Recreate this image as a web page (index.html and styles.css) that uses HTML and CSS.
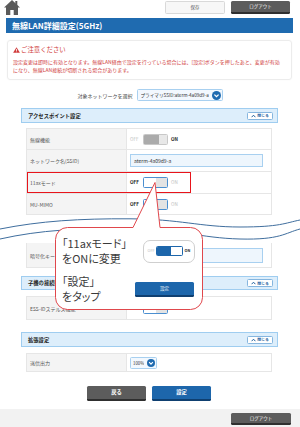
FILE: index.html
```html
<!DOCTYPE html>
<html lang="ja">
<head>
<meta charset="utf-8">
<title>無線LAN詳細設定(5GHz)</title>
<link rel="stylesheet" href="styles.css">
</head>
<body>
<div class="page">
  <header class="topbar">
    <a class="home-link" href="#" aria-label="ホーム">
      <svg class="home" width="16" height="15" viewBox="0 0 16 15">
        <polygon points="8,0 0,7.5 16,7.5" fill="#5a5a5a"/>
        <rect x="11.3" y="1" width="2" height="5" fill="#5a5a5a"/>
        <rect x="2" y="7" width="12" height="8" fill="#5a5a5a"/>
        <rect x="6.3" y="10" width="3.4" height="5" fill="#ffffff"/>
      </svg>
    </a>
    <div class="top-actions">
      <button class="btn btn-light">保存</button>
      <button class="btn btn-dark">ログアウト</button>
    </div>
  </header>

  <h1 class="title">無線LAN詳細設定(5GHz)</h1>

  <div class="notice">
    <p class="notice-head">
      <svg class="warn" width="7" height="6" viewBox="0 0 7 6" aria-hidden="true"><path d="M3.5 0.2 L6.9 5.8 L0.1 5.8 Z" fill="#d03a3a"/><rect x="3.1" y="1.9" width="0.8" height="2.1" fill="#fff"/><rect x="3.1" y="4.5" width="0.8" height="0.7" fill="#fff"/></svg>
      ご注意ください
    </p>
    <p class="notice-body">設定変更は即時に有効となります。無線LAN経由で設定を行っている場合には、[設定]ボタンを押したあと、変更が有効<br>になり、無線LAN接続が切断される場合があります。</p>
  </div>

  <div class="netsel">
    <span class="netsel-label">対象ネットワークを選択</span>
    <div class="select select-wide">
      <span class="select-text">プライマリSSID:aterm-4a09d9-a</span>
      <svg class="chev" width="9" height="9" viewBox="0 0 9 9" aria-hidden="true"><circle cx="4.5" cy="4.5" r="4.5" fill="#1f6bb0"/><path d="M2.4 3.6 L4.5 5.7 L6.6 3.6" stroke="#fff" stroke-width="1.3" fill="none"/></svg>
    </div>
  </div>

  <div class="section-head">
    <span>アクセスポイント設定</span>
    <button class="close-btn"><svg width="5" height="4" viewBox="0 0 5 4" aria-hidden="true"><path d="M0.6 3.2 L2.5 1.2 L4.4 3.2" stroke="#1f5f9e" stroke-width="1" fill="none"/></svg>閉じる</button>
  </div>

  <div class="table">
    <div class="row h21">
      <div class="label">無線機能</div>
      <div class="value">
        <span class="sw-txt dim">OFF</span>
        <span class="toggle t-disabled"><i></i><b></b></span>
        <span class="sw-txt strong">ON</span>
      </div>
    </div>
    <div class="row h22">
      <div class="label">ネットワーク名(SSID)</div>
      <div class="value"><div class="input">aterm-4a09d9-a</div></div>
    </div>
    <div class="row h22 marked">
      <div class="label">11axモード</div>
      <div class="value">
        <span class="sw-txt strong">OFF</span>
        <span class="toggle t-off"><i></i><b></b></span>
        <span class="sw-txt dim">ON</span>
      </div>
      <span class="highlight"></span>
    </div>
    <div class="row h21">
      <div class="label">MU-MIMO</div>
      <div class="value">
        <span class="sw-txt strong">OFF</span>
        <span class="toggle t-off"><i></i><b></b></span>
        <span class="sw-txt dim">ON</span>
      </div>
    </div>
  </div>

  <div class="cut">
    <svg width="300" height="28" viewBox="0 0 300 28" aria-hidden="true">
      <path d="M0 14 C 40 6, 80 3.5, 130 3.8 S 200 12, 240 12 S 285 8, 300 5" stroke="#3f6e9e" stroke-width="1" fill="none"/>
      <path d="M0 24 C 40 15, 80 13, 130 13.5 S 200 23, 240 24 S 285 18, 300 14" stroke="#3f6e9e" stroke-width="1" fill="none"/>
    </svg>
  </div>

  <div class="table table-cont">
    <div class="row h25">
      <div class="label">暗号化キー</div>
      <div class="value"><div class="input"></div></div>
    </div>
  </div>

  <div class="section-head sh2">
    <span>子機の接続制限</span>
    <button class="close-btn"><svg width="5" height="4" viewBox="0 0 5 4" aria-hidden="true"><path d="M0.6 3.2 L2.5 1.2 L4.4 3.2" stroke="#1f5f9e" stroke-width="1" fill="none"/></svg>閉じる</button>
  </div>

  <div class="table table-sub">
    <div class="row h23">
      <div class="label">ESS-IDステルス機能</div>
      <div class="value">
        <span class="sw-txt strong">OFF</span>
        <span class="toggle t-off"><i></i><b></b></span>
        <span class="sw-txt dim">ON</span>
      </div>
    </div>
  </div>

  <div class="section-head sh3">
    <span>拡張設定</span>
    <button class="close-btn"><svg width="5" height="4" viewBox="0 0 5 4" aria-hidden="true"><path d="M0.6 3.2 L2.5 1.2 L4.4 3.2" stroke="#1f5f9e" stroke-width="1" fill="none"/></svg>閉じる</button>
  </div>

  <div class="table table-sub">
    <div class="row h18">
      <div class="label">送信出力</div>
      <div class="value">
        <div class="select select-small">
          <span class="select-text">100%</span>
          <svg class="chev" width="8" height="8" viewBox="0 0 9 9" aria-hidden="true"><circle cx="4.5" cy="4.5" r="4.5" fill="#1f6bb0"/><path d="M2.4 3.6 L4.5 5.7 L6.6 3.6" stroke="#fff" stroke-width="1.3" fill="none"/></svg>
        </div>
      </div>
    </div>
  </div>

  <div class="actions">
    <button class="btn btn-big btn-dark">戻る</button>
    <button class="btn btn-big btn-blue">設定</button>
  </div>

  <footer class="footer">
    <button class="btn btn-dark">ログアウト</button>
  </footer>

  <div class="callout">
    <svg class="callout-shape" width="148" height="128" viewBox="0 0 148 128" aria-hidden="true">
      <path d="M12.5 45.5 H78 L100 0.5 L105 45.5 H135.5 A12 12 0 0 1 147.5 57.5 V115.5 A12 12 0 0 1 135.5 127.5 H12.5 A12 12 0 0 1 0.5 115.5 V57.5 A12 12 0 0 1 12.5 45.5 Z" fill="#fff" stroke="#e0474c" stroke-width="1"/>
    </svg>
    <div class="callout-body">
      <p class="callout-text">「11axモード」<br>をONに変更</p>
      <div class="demo-switch">
        <span class="sw-txt dim">OFF</span>
        <span class="toggle t-on"><i></i><b></b></span>
        <span class="sw-txt strong">ON</span>
      </div>
      <p class="callout-text">「設定」<br>をタップ</p>
      <div class="demo-btn">設定</div>
    </div>
  </div>
</div>
</body>
</html>
```

FILE: styles.css
```css
* { box-sizing: border-box; }

html, body {
  margin: 0;
  padding: 0;
  background: #fff;
}

body {
  font-family: "Noto Sans CJK JP", "Noto Sans", sans-serif;
  color: #444;
}

.page {
  position: relative;
  width: 300px;
  height: 427px;
  overflow: hidden;
  display: flex;
  flex-direction: column;
}

p { margin: 0; }

button {
  font-family: inherit;
  margin: 0;
  padding: 0;
  cursor: pointer;
}

/* top bar */
.topbar {
  height: 16px;
  display: flex;
  justify-content: space-between;
  align-items: flex-start;
  padding: 0 10px 0 4px;
  flex: none;
}

.home-link {
  display: block;
  flex: none;
  width: 16px;
  height: 15px;
}

.home { display: block; width: 16px; height: 15px; }

.top-actions {
  display: flex;
  gap: 6px;
  margin-top: 1px;
}

.btn {
  height: 13px;
  width: 60px;
  font-size: 4.5px;
  line-height: 1;
  border-radius: 1.5px;
  display: flex;
  align-items: center;
  justify-content: center;
}

.btn-light {
  background: #f7f7f7;
  border: 1px solid #d9d9d9;
  color: #555;
}

.btn-dark {
  width: 59px;
  background: #5c5c5c;
  border: none;
  border-bottom: 2px solid #2f2f2f;
  color: #fff;
}

.btn-blue {
  background: #1d66ab;
  border: none;
  border-bottom: 2px solid #0f3f70;
  color: #fff;
}

/* title */
.title {
  flex: none;
  margin: 2px 7px 0 6px;
  height: 15px;
  background: #1f6bb0;
  color: #fff;
  font-size: 8px;
  font-weight: 700;
  line-height: 15px;
  padding-left: 6px;
}

/* notice */
.notice {
  flex: none;
  margin: 7px 8px 0 7px;
  height: 40px;
  border: 1px solid #ececec;
  border-radius: 3px;
  box-shadow: 0 0 2px rgba(0,0,0,0.04);
  padding: 5px 6px 0 5px;
  color: #cf3a3a;
}

.notice-head {
  display: flex;
  align-items: center;
  gap: 1px;
  font-size: 6.4px;
  line-height: 8px;
  height: 8px;
}

.warn { display: block; }

.notice-body {
  margin-top: 4px;
  font-size: 5px;
  line-height: 8px;
  white-space: nowrap;
}

/* network select */
.netsel {
  flex: none;
  margin-top: 9px;
  height: 12px;
  display: flex;
  justify-content: center;
  align-items: center;
  gap: 4px;
}

.netsel-label {
  font-size: 5px;
  color: #444;
}

.select {
  height: 12px;
  border: 1px solid #a8d0f0;
  background: #f2f8fe;
  border-radius: 1.5px;
  display: flex;
  align-items: center;
  justify-content: space-between;
  gap: 1px;
  padding: 0 1px 0 3px;
  font-size: 4.6px;
  color: #333;
}

.select-text {
  white-space: nowrap;
  overflow: hidden;
  min-width: 0;
}

.select-wide { width: 86px; }

.select-small {
  width: 27px;
  padding-left: 2px;
  font-size: 4.3px;
}

.chev { display: block; flex: none; }

/* section header */
.section-head {
  flex: none;
  margin: 7px 22px 0 21px;
  height: 15px;
  background: #ddeefb;
  border: 1px solid #9fcdf0;
  display: flex;
  justify-content: space-between;
  align-items: center;
  padding: 0 4px 0 6px;
  font-size: 5.3px;
  font-weight: 700;
  color: #222;
}

.sh2 { margin-top: 8px; height: 14px; }
.sh3 { margin-top: 12px; }

.close-btn {
  width: 26px;
  height: 8px;
  background: #fff;
  border: 1px solid #86b6df;
  border-radius: 1.5px;
  font-size: 3.8px;
  font-weight: 700;
  color: #1f5f9e;
  display: flex;
  align-items: center;
  justify-content: center;
  gap: 1px;
}

/* tables */
.table {
  flex: none;
  margin: 5px 28px 0 26px;
  border: 1px solid #e6e6e6;
  border-bottom: none;
}

.table-cont { margin-top: 0; border-top: none; }
.table-sub { margin-top: 6px; }

.row {
  position: relative;
  display: grid;
  grid-template-columns: 100px 1fr;
  border-bottom: 1px solid #e6e6e6;
}

.h18 { height: 18px; }
.h21 { height: 21px; }
.h22 { height: 22px; }
.h23 { height: 23px; }
.h25 { height: 25px; }

.label {
  background: #f4f4f4;
  border-right: 1px solid #e6e6e6;
  font-size: 5px;
  color: #555;
  display: flex;
  align-items: center;
  padding-left: 3px;
  white-space: nowrap;
  overflow: hidden;
}

.value {
  display: flex;
  align-items: center;
  gap: 2px;
  padding-left: 3px;
}

.input {
  width: 133px;
  height: 13px;
  border: 1px solid #a8d0f0;
  background: #eef6fd;
  font-size: 5px;
  color: #333;
  display: flex;
  align-items: center;
  padding-left: 3px;
}

.h25 .input { height: 15px; }

.sw-txt {
  font-size: 4.6px;
  width: 11px;
  line-height: 1;
}

.sw-txt.dim { color: #bdbdbd; }
.sw-txt.strong { color: #222; font-weight: 700; }

.value .sw-txt:last-child { width: auto; margin-left: 1px; }

.toggle {
  display: flex;
  width: 25px;
  height: 11px;
  border-radius: 1.5px;
  overflow: hidden;
}

.toggle i, .toggle b { display: block; height: 100%; }

.t-disabled { border: 1px solid #c8c8c8; }
.t-disabled i { width: 15px; background: #ababab; }
.t-disabled b { flex: 1; background: #e8e8e8; }

.t-off { border: 1px solid #4b8fd0; }
.t-off i { width: 12px; background: #fff; }
.t-off b { flex: 1; background: #e3e3e3; }

.t-on { border: 1px solid #1d66ab; width: 27px; height: 10px; }
.t-on i { width: 14px; background: #1d66ab; }
.t-on b { flex: 1; background: #fff; }

/* red highlight around 11ax row */
.highlight {
  position: absolute;
  left: 0;
  top: 0;
  width: 164px;
  height: 21px;
  border: 1.5px solid #e8141b;
  pointer-events: none;
}

/* wave break */
.cut {
  flex: none;
  height: 28px;
  background: #fff;
}

.cut svg { display: block; }

/* actions */
.actions {
  flex: none;
  margin-top: 14px;
  display: flex;
  justify-content: center;
  gap: 6px;
  padding-right: 2px;
}

.btn-big {
  width: 59px;
  height: 15px;
  font-size: 5.3px;
  font-weight: 700;
}

/* footer */
.footer {
  flex: none;
  margin-top: 8px;
  height: 21px;
  background: #f2f2f2;
  display: flex;
  justify-content: flex-end;
  align-items: flex-start;
  padding: 4px 9px 0 0;
}

.footer .btn { height: 12px; width: 60px; }

/* callout */
.callout {
  position: absolute;
  left: 55px;
  top: 182px;
  width: 148px;
  height: 128px;
}

.callout-shape {
  position: absolute;
  left: 0;
  top: 0;
}

.callout-body {
  position: relative;
  margin-top: 45px;
  padding: 9px 8px 0 7px;
  display: grid;
  grid-template-columns: 73px 1fr;
  grid-template-rows: 30px 30px;
  row-gap: 8px;
  align-items: center;
}

.callout-text {
  font-size: 11px;
  line-height: 15px;
  color: #3a3a3a;
  font-feature-settings: "palt";
  white-space: nowrap;
}

.demo-switch {
  justify-self: end;
  width: 52px;
  height: 23px;
  border: 1.5px solid #cfcfcf;
  border-radius: 7px;
  display: flex;
  align-items: center;
  justify-content: center;
  gap: 1.5px;
}

.demo-switch .sw-txt { width: auto; font-size: 3.8px; }

.demo-btn {
  width: 59px;
  height: 15px;
  background: #1d66ab;
  border-bottom: 2px solid #0f3f70;
  border-radius: 1.5px;
  color: #fff;
  font-size: 4.6px;
  display: flex;
  align-items: center;
  justify-content: center;
}
```
